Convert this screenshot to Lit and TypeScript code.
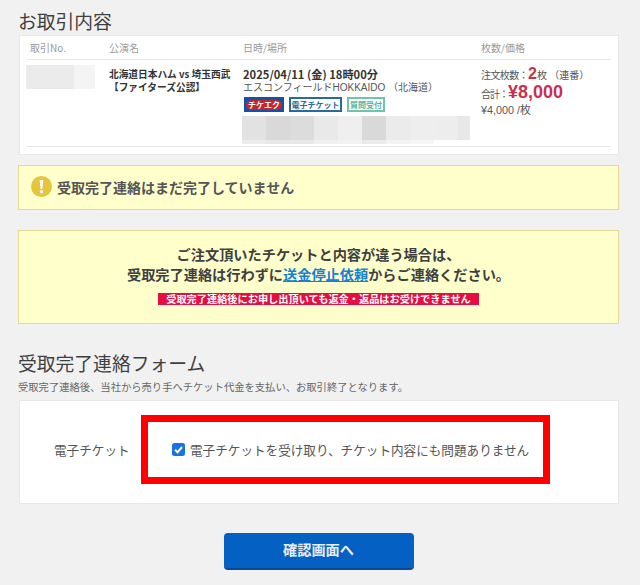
import { LitElement, html, css } from "lit";
import { customElement } from "lit/decorators.js";

// blurred-out areas of the original, one shade per mosaic cell
const SEAT_CELLS = ["#e2e2e2", "#d9d9d9", "#dcdcdc", "#e9e9e9", "#efefef", "#d9d9d9", "#ebebeb", "#eeeeee", "#ededed", "#e8e8e8"];
const SEAT_TAIL = ["#ececec", "#e8e8e8", "#e8e8e8", "#f0f0f0", "#f2f2f2", "#ebebeb", "#f3f3f3", "#f6f6f6"];

@customElement("app-root")
export class AppRoot extends LitElement {
  static styles = css`
    :host {
      display: block;
      min-height: 585px;
      background: #f1f1f1;
      color: #444;
      font-family: "Noto Sans CJK JP", "Liberation Sans", sans-serif;
      overflow: hidden;
    }

    .page {
      padding: 9px 21px 15px 18px;
      display: flex;
      flex-direction: column;
    }

    h2 {
      margin: 0;
      font-size: 18.8px;
      line-height: 24px;
      font-weight: 400;
      color: #3f3f3f;
    }

    .card {
      background: #fff;
      border: 1px solid #e8e8e8;
    }

    .deal {
      margin: 2px 0 0 1px;
      padding: 0 7px 8px 7px;
      height: 120px;
      box-sizing: border-box;
    }

    .cols {
      display: grid;
      grid-template-columns: 82px 134px 238px 1fr;
    }

    .head {
      height: 23px;
      align-items: center;
      font-size: 10px;
      color: #999;
      border-bottom: 1px solid #e6e6e6;
    }

    .head .no {
      padding-left: 3px;
    }

    .body {
      height: 87px;
      border-bottom: 1px solid #e6e6e6;
      box-sizing: border-box;
      padding-top: 5px;
      font-size: 10.5px;
      line-height: 13px;
    }

    .no-mask {
      display: flex;
      width: 69px;
      height: 24px;
      margin-left: -1px;
    }

    .no-mask i:first-child {
      width: 48px;
      background: #ebebeb;
    }

    .no-mask i:last-child {
      width: 21px;
      background: #f4f4f4;
    }

    .name {
      padding-top: 3px;
      font-size: 9.7px;
      font-weight: 700;
      color: #333;
    }

    .when {
      padding-top: 3px;
      font-weight: 700;
      font-size: 11.2px;
      color: #333;
    }

    .where {
      color: #555;
      font-family: "Liberation Sans", "Noto Sans CJK JP", sans-serif;
      font-size: 10px;
    }

    .tags {
      display: flex;
      gap: 5px;
      margin-top: 3px;
      margin-left: 1px;
    }

    .tag {
      height: 15px;
      box-sizing: border-box;
      display: flex;
      align-items: center;
      justify-content: center;
      font-size: 8px;
      line-height: 1;
      font-weight: 700;
    }

    .tag.eq {
      width: 40px;
      background: #0d55a8;
      color: #fff;
    }

    .tag.eq span {
      padding: 1px 2px;
      border-radius: 5px;
      background: #c4262e;
    }

    .tag.e {
      width: 53px;
      border: 2px solid #2a6a96;
      color: #2a6a96;
    }

    .tag.q {
      width: 38px;
      border: 2px solid #6fc4ae;
      color: #58b59c;
    }

    .seat-mask {
      margin-left: -1px;
      margin-top: 4px;
      width: 228px;
      overflow: hidden;
    }

    .mask-row {
      display: flex;
    }

    .mask-row i {
      display: block;
      width: 24px;
      flex: none;
    }

    .mask-row.top i {
      height: 24px;
    }

    .mask-row.tail i {
      height: 4px;
    }

    .price {
      padding-top: 1px;
      color: #555;
      font-size: 10px;
      line-height: 16.5px;
    }

    .price em {
      font-family: "Liberation Sans", sans-serif;
      font-style: normal;
      color: #c9304f;
      font-weight: 700;
    }

    .price .count-label {
      letter-spacing: -0.6px;
    }

    .price .total-label {
      letter-spacing: -1px;
    }

    .price .qty {
      font-size: 16px;
    }

    .price .total {
      font-size: 18px;
    }

    .price .unit {
      font-family: "Liberation Sans", "Noto Sans CJK JP", sans-serif;
      font-size: 10.8px;
    }

    .notice {
      background: #ffffcc;
      border: 1px solid #e8d898;
    }

    .status {
      margin-top: 10px;
      height: 45px;
      box-sizing: border-box;
      display: flex;
      align-items: center;
      gap: 5px;
      padding: 0 0 2px 12px;
      font-size: 14px;
      font-weight: 700;
      color: #555;
    }

    .warn {
      margin-top: 20px;
      height: 94px;
      box-sizing: border-box;
      display: flex;
      flex-direction: column;
      align-items: center;
      padding-top: 13px;
      font-size: 14.2px;
      line-height: 20px;
      font-weight: 700;
      color: #3f3f3f;
    }

    .warn a {
      color: #1a7fd4;
      text-decoration: underline;
    }

    .strip {
      margin-top: 9px;
      width: 321px;
      height: 12px;
      background: #e60d42;
      color: #fff;
      font-size: 10.2px;
      line-height: 12px;
      text-align: center;
      white-space: nowrap;
    }

    .form-title {
      margin-top: 27px;
    }

    .lead {
      margin: 5px 0 0;
      font-size: 10.3px;
      line-height: 14px;
      color: #666;
    }

    .form {
      margin: 6px 0 0 1px;
      height: 104px;
      box-sizing: border-box;
      display: flex;
      align-items: flex-start;
      padding: 14px 0 0 34px;
      font-size: 12.6px;
      color: #555;
    }

    .form .label {
      width: 87px;
      line-height: 69px;
    }

    .mark {
      width: 409px;
      height: 69px;
      box-sizing: border-box;
      border: 7px solid #fe0000;
      display: flex;
      align-items: center;
      gap: 5px;
      padding-left: 24px;
    }

    .box {
      width: 13px;
      height: 13px;
      flex: none;
      display: block;
    }

    .actions {
      display: flex;
      justify-content: center;
      margin-top: 29px;
    }

    button {
      width: 190px;
      height: 37px;
      border: 0;
      border-bottom: 2px solid #0a4a94;
      border-radius: 4px;
      padding: 0 0 3px;
      background: #0560c4;
      color: #e6f0fa;
      font: 700 14.2px "Noto Sans CJK JP", "Liberation Sans", sans-serif;
    }
  `;

  render() {
    return html`
      <div class="page">
        <h2>お取引内容</h2>
        <section class="card deal">
          <div class="cols head">
            <span class="no">取引No.</span><span>公演名</span><span>日時/場所</span><span>枚数/価格</span>
          </div>
          <div class="cols body">
            <div class="no-mask"><i></i><i></i></div>
            <div class="name">北海道日本ハム vs 埼玉西武<br />【ファイターズ公認】</div>
            <div>
              <div class="when">2025/04/11 (金) 18時00分</div>
              <div class="where">エスコンフィールドHOKKAIDO （北海道）</div>
              <div class="tags">
                <span class="tag eq"><span>チケエク</span></span>
                <span class="tag e">電子チケット</span>
                <span class="tag q">質問受付</span>
              </div>
              <div class="seat-mask">
                <div class="mask-row top">
                  ${SEAT_CELLS.map((c) => html`<i style="background:${c}"></i>`)}
                </div>
                <div class="mask-row tail">
                  ${SEAT_TAIL.map((c) => html`<i style="background:${c}"></i>`)}
                </div>
              </div>
            </div>
            <div class="price">
              <div><span class="count-label">注文枚数：</span><em class="qty">2</em>枚 （連番）</div>
              <div><span class="total-label">合計：</span><em class="total">¥8,000</em></div>
              <div class="unit">¥4,000 /枚</div>
            </div>
          </div>
        </section>

        <div class="notice status">
          <svg width="21" height="21" viewBox="0 0 21 21" aria-hidden="true">
            <circle cx="10.5" cy="10.5" r="10.5" fill="#e6c43c" />
            <path d="M8.6 4h3.8l-1 9h-1.8z" fill="#fff" />
            <circle cx="10.5" cy="15.8" r="1.7" fill="#fff" />
          </svg>
          <span>受取完了連絡はまだ完了していません</span>
        </div>

        <div class="notice warn">
          <div>ご注文頂いたチケットと内容が違う場合は、</div>
          <div>受取完了連絡は行わずに<a href="#">送金停止依頼</a>からご連絡ください。</div>
          <div class="strip">受取完了連絡後にお申し出頂いても返金・返品はお受けできません</div>
        </div>

        <h2 class="form-title">受取完了連絡フォーム</h2>
        <p class="lead">受取完了連絡後、当社から売り手へチケット代金を支払い、お取引終了となります。</p>
        <section class="card form">
          <span class="label">電子チケット</span>
          <div class="mark">
            <svg class="box" viewBox="0 0 13 13" aria-hidden="true">
              <rect width="13" height="13" rx="2.5" fill="#1a73e0" />
              <path d="M3 6.8l2.5 2.5L10 4" fill="none" stroke="#fff" stroke-width="2" />
            </svg>
            <span>電子チケットを受け取り、チケット内容にも問題ありません</span>
          </div>
        </section>

        <div class="actions"><button>確認画面へ</button></div>
      </div>
    `;
  }
}
